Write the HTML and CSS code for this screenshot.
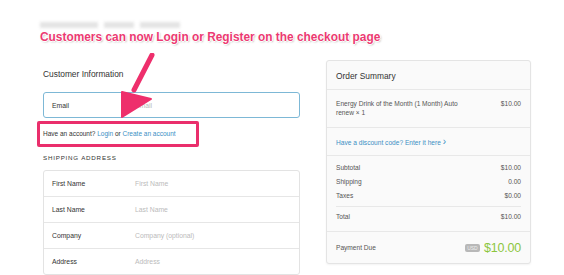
FILE: index.html
```html
<!DOCTYPE html>
<html lang="en">
<head>
  <meta charset="UTF-8">
  <title>Checkout</title>
  <link rel="stylesheet" href="styles.css">
</head>
<body>
  <div class="page">
    <!-- Blurred breadcrumb + annotation headline -->
    <div class="header">
      <div class="crumbs">
        <span class="crumb w1"></span><span class="crumb w2"></span><span class="crumb w3"></span>
      </div>
      <div class="headline">Customers can now Login or Register on the checkout page</div>
    </div>

    <div class="columns">
      <!-- Left: customer info -->
      <div class="main">
        <h2 class="section-title">Customer Information</h2>
        <div class="email-field">
          <span class="field-label">Email</span>
          <span class="field-placeholder">Email</span>
        </div>
        <div class="account-box">
          Have an account? <a href="#" class="link">Login</a> or <a href="#" class="link">Create an account</a>
        </div>
        <div class="caps-title">Shipping Address</div>
        <div class="address-table">
          <div class="address-row">
            <span class="field-label">First Name</span>
            <span class="field-placeholder">First Name</span>
          </div>
          <div class="address-row">
            <span class="field-label">Last Name</span>
            <span class="field-placeholder">Last Name</span>
          </div>
          <div class="address-row">
            <span class="field-label">Company</span>
            <span class="field-placeholder">Company (optional)</span>
          </div>
          <div class="address-row">
            <span class="field-label">Address</span>
            <span class="field-placeholder">Address</span>
          </div>
        </div>
      </div>

      <!-- Right: order summary -->
      <div class="summary">
        <div class="summary-head">Order Summary</div>
        <div class="summary-block item">
          <div class="item-name">Energy Drink of the Month (1 Month) Auto renew &times; 1</div>
          <div class="item-price">$10.00</div>
        </div>
        <div class="summary-block">
          <a href="#" class="link discount">Have a discount code? Enter it here <span class="chev">&#x203A;</span></a>
        </div>
        <div class="summary-block totals">
          <div class="line"><span>Subtotal</span><span>$10.00</span></div>
          <div class="line"><span>Shipping</span><span>0.00</span></div>
          <div class="line"><span>Taxes</span><span>$0.00</span></div>
          <div class="line total"><span>Total</span><span>$10.00</span></div>
        </div>
        <div class="summary-block due">
          <span>Payment Due</span>
          <span class="due-amount"><span class="currency">USD</span>$10.00</span>
        </div>
      </div>
    </div>

    <!-- Annotation arrow -->
    <svg class="arrow" width="70" height="80" viewBox="0 0 70 80">
      <path d="M52 2 L34 37" stroke="#ee2f6c" stroke-width="5" stroke-linecap="round" fill="none"/>
      <path d="M22 39 L51 46 L22 64 Z" fill="#ee2f6c" stroke="#ee2f6c" stroke-width="2" stroke-linejoin="round"/>
    </svg>
  </div>
</body>
</html>
```

FILE: styles.css
```css
/* Base */
* {
  box-sizing: border-box;
  margin: 0;
  padding: 0;
}
body {
  background: #ffffff;
  color: #333333;
  font-family: 'Liberation Sans', Arial, sans-serif;
  -webkit-font-smoothing: antialiased;
}
.page {
  position: relative;
  width: 564px;
  height: 275px;
  overflow: hidden;
}

/* Header */
.header {
  height: 60px;
  padding: 22px 0 0 40px;
}
.crumbs {
  display: flex;
  gap: 6px;
  filter: blur(1.5px);
}
.crumb {
  display: block;
  height: 6px;
  background: #e4e4e4;
}
.w1 { width: 58px; }
.w2 { width: 30px; }
.w3 { width: 40px; }
.headline {
  margin-top: 2px;
  color: #ec3a72;
  font-size: 11.9px;
  line-height: 14px;
  font-weight: 700;
  white-space: nowrap;
  text-shadow: -1px 0 #fff, 1px 0 #fff, 0 -1px #fff, 0 1px #fff, 1px 1px 2px rgba(0,0,0,0.35);
}

/* Columns */
.columns {
  display: flex;
  padding-left: 43px;
  gap: 26px;
}
.main {
  width: 257px;
}
.section-title {
  margin-top: 9px;
  font-size: 8.4px;
  line-height: 10px;
  font-weight: 400;
  color: #333;
}
.email-field {
  display: flex;
  align-items: center;
  height: 26px;
  margin-top: 13px;
  border: 1px solid #7db8d6;
  border-radius: 3px;
}
.field-label {
  width: 91px;
  padding-left: 8px;
  color: #333;
  font-size: 6.8px;
}
.field-placeholder {
  color: #bbb;
  font-size: 6.8px;
}
.account-box {
  margin: 3px 0 0 -6px;
  width: 162px;
  height: 26px;
  padding: 6px 0 0 3px;
  border: 3px solid #ea2f6c;
  border-radius: 2px;
  font-size: 6.5px;
  line-height: 8px;
  color: #333;
  white-space: nowrap;
}
.link {
  color: #3b8fc4;
  text-decoration: none;
}
.caps-title {
  margin-top: 7px;
  font-size: 6.2px;
  line-height: 8px;
  letter-spacing: 0.8px;
  text-transform: uppercase;
  color: #333;
}
.address-table {
  margin-top: 8px;
  border: 1px solid #e3e3e3;
  border-radius: 3px;
}
.address-row {
  display: flex;
  align-items: center;
  height: 26px;
  border-top: 1px solid #e6e6e6;
}
.address-row:first-child {
  height: 25px;
  border-top: none;
}

/* Order summary */
.summary {
  width: 205px;
  align-self: flex-start;
  background: #fafafa;
  border: 1px solid #e4e4e4;
  border-radius: 3px;
  box-shadow: 0 1px 2px rgba(0,0,0,0.05);
  font-size: 6.6px;
  color: #555;
}
.summary-head {
  height: 29px;
  padding: 10px 0 0 9px;
  font-size: 8.4px;
  line-height: 10px;
  color: #333;
  border-bottom: 1px solid #e8e8e8;
}
.summary-block {
  padding: 0 9px;
  border-bottom: 1px solid #e8e8e8;
}
.item {
  display: flex;
  justify-content: space-between;
  height: 38px;
  padding-top: 10px;
  line-height: 8.5px;
}
.item-name {
  width: 132px;
}
.discount {
  display: block;
  height: 27px;
  padding-top: 11px;
  font-size: 6.6px;
}
.chev {
  font-size: 10px;
  line-height: 6px;
}
.totals {
  padding-top: 8px;
}
.line {
  display: flex;
  justify-content: space-between;
  height: 14px;
}
.line.total {
  height: 25px;
  padding-top: 6px;
  border-top: 1px solid #e8e8e8;
}
.due {
  display: flex;
  justify-content: space-between;
  align-items: center;
  height: 31px;
  border-bottom: none;
}
.due-amount {
  display: flex;
  align-items: center;
  gap: 4px;
  color: #8cc63e;
  font-size: 12.5px;
  letter-spacing: -0.2px;
}
.currency {
  width: 15px;
  height: 8px;
  background: #b8b8b8;
  color: #efefef;
  font-size: 5px;
  line-height: 8px;
  text-align: center;
  letter-spacing: 0;
  border-radius: 2px;
}

/* Annotation arrow overlay */
.arrow {
  position: absolute;
  left: 100px;
  top: 53px;
}
```
